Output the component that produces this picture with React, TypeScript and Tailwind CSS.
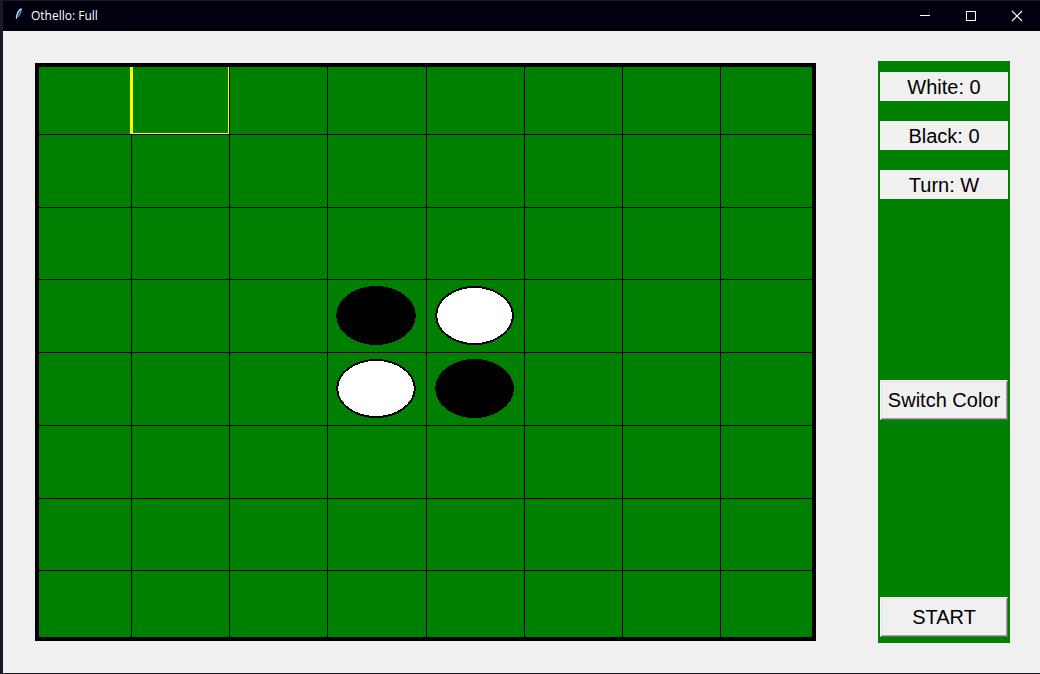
import { useState } from "react";

type Disc = "black" | "white";

const SIZE = 8;

const OPENING: Record<string, Disc> = {
  "3-3": "black",
  "3-4": "white",
  "4-3": "white",
  "4-4": "black",
};

function FeatherIcon() {
  return (
    <svg viewBox="0 0 8 12" className="h-3 w-2" aria-hidden="true">
      <path d="M6.8 0.4 C4.2 1.4 2.2 4.2 1.6 7.6 L1 11 L2.4 9.6 C4.6 8 6.4 4.4 6.8 0.4Z" fill="#3d7cc6" />
      <path d="M6.4 0.6 C4.2 1.8 2.4 4.4 1.7 7.8 L1.3 10.6" fill="none" stroke="#c4e2f8" strokeWidth="1.2" />
      <path d="M5.4 3.4 L3.8 6 L2.8 8.4" fill="none" stroke="#0c1a33" strokeWidth="0.6" />
      <path d="M6.6 1 C6.4 4 5 7 2.8 9" fill="none" stroke="#5a9be0" strokeWidth="0.9" />
    </svg>
  );
}

function TitleBar() {
  const control = "flex h-full w-[46px] items-center justify-center text-white";
  return (
    <header className="flex h-[30px] shrink-0 items-center bg-[#00000f]">
      <div className="flex flex-1 items-center gap-2 pl-3">
        <div className="pb-1">
          <FeatherIcon />
        </div>
        <h1 className="font-['Open_Sans','Noto_Sans',sans-serif] text-[12px] leading-4 text-white">Othello: Full</h1>
      </div>
      <div className="flex h-full">
        <button type="button" aria-label="Minimize" className={control}>
          <svg viewBox="0 0 10 10" className="size-2.5" shapeRendering="crispEdges">
            <path d="M0 4.5H10" stroke="currentColor" />
          </svg>
        </button>
        <button type="button" aria-label="Maximize" className={control}>
          <svg viewBox="0 0 10 10" className="size-2.5" shapeRendering="crispEdges">
            <rect x="0.5" y="0.5" width="9" height="9" fill="none" stroke="currentColor" />
          </svg>
        </button>
        <button type="button" aria-label="Close" className={control}>
          <svg viewBox="0 0 10 10" className="size-2.5 overflow-visible">
            <path d="M0 0L10 10M10 0L0 10" stroke="currentColor" strokeWidth="1.2" />
          </svg>
        </button>
      </div>
    </header>
  );
}

function Piece({ disc }: { disc: Disc }) {
  return (
    <svg viewBox="0 0 80 59" preserveAspectRatio="none" className="block size-full" shapeRendering="crispEdges" aria-hidden="true">
      <ellipse cx="40" cy="29.5" rx="38.8" ry="28.5" fill={disc} stroke="black" strokeWidth="2" />
    </svg>
  );
}

function Board() {
  const [selected, setSelected] = useState("0-1");
  const cells = Array.from({ length: SIZE * SIZE }, (_, i) => [Math.floor(i / SIZE), i % SIZE]);
  return (
    <main className="grid flex-1 grid-cols-[93fr_98fr_98fr_99fr_98fr_98fr_98fr_91fr] grid-rows-[68fr_73fr_72fr_73fr_73fr_73fr_72fr_66fr] border-4 border-black bg-[#008000]">
      {cells.map(([row, col]) => {
        const id = `${row}-${col}`;
        const disc = OPENING[id];
        return (
          <button
            key={id}
            type="button"
            aria-label={`Row ${row + 1}, column ${col + 1}`}
            onClick={() => setSelected(id)}
            className={`relative min-h-0 min-w-0 border-black pt-1.5 pr-2.5 pb-[7px] pl-2 ${col < SIZE - 1 ? "border-r" : ""} ${row < SIZE - 1 ? "border-b" : ""}`}
          >
            {disc && <Piece disc={disc} />}
            {selected === id && (
              <span className="absolute inset-y-0 right-0 -left-0.5 z-10 border-r border-b border-l-3 border-[#ffff00]" />
            )}
          </button>
        );
      })}
    </main>
  );
}

function Score({ children }: { children: string }) {
  return <p className="bg-[#f0f0f0] pt-[3px] pb-0.5 text-center text-[20px] leading-6">{children}</p>;
}

function RaisedButton({ children }: { children: string }) {
  return (
    <button
      type="button"
      className="h-10 w-full border border-t-white border-r-[#696969] border-b-[#696969] border-l-white bg-[#f0f0f0] text-center text-[20px] leading-6 whitespace-nowrap shadow-[inset_1px_1px_0_#e3e3e3,inset_-1px_-1px_0_#a0a0a0]"
    >
      {children}
    </button>
  );
}

function Sidebar() {
  return (
    <aside className="-my-0.5 flex w-[132px] shrink-0 flex-col bg-[#008000] px-0.5 pt-[11px] pb-1.5">
      <div className="flex flex-col gap-5">
        <Score>White: 0</Score>
        <Score>Black: 0</Score>
        <Score>Turn: W</Score>
      </div>
      <div className="flex flex-1 items-center pt-1">
        <RaisedButton>Switch Color</RaisedButton>
      </div>
      <RaisedButton>START</RaisedButton>
    </aside>
  );
}

export default function App() {
  return (
    <div className="flex min-h-screen flex-col border-t border-b border-l-3 border-[#171923] bg-[#f0f0f0] font-['Liberation_Sans',Arial,sans-serif] text-black">
      <TitleBar />
      <div className="flex flex-1 gap-[62px] py-8 pr-[30px] pl-8">
        <Board />
        <Sidebar />
      </div>
    </div>
  );
}
